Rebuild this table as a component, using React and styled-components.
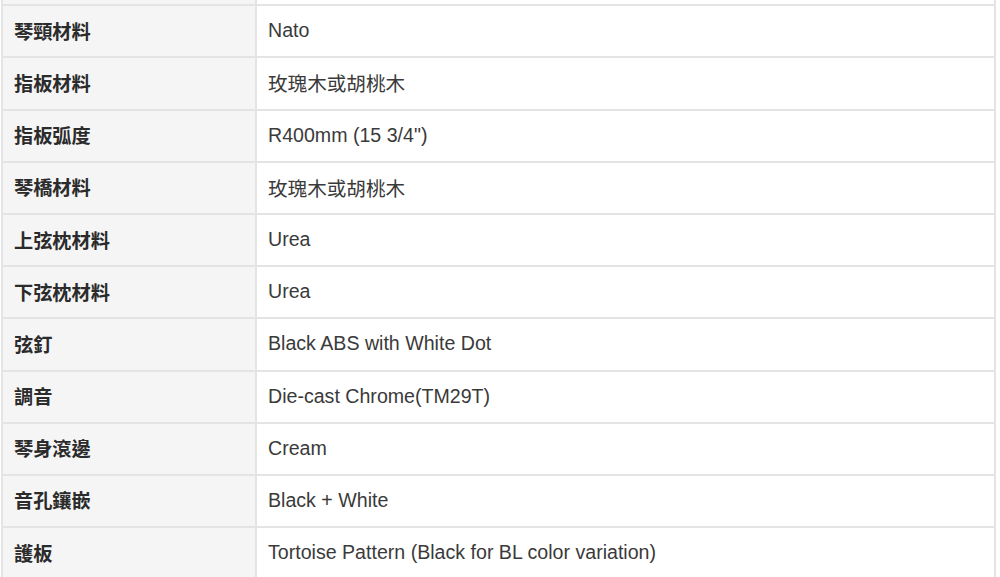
import React from 'react';
import styled, { createGlobalStyle } from 'styled-components';

const GlobalStyle = createGlobalStyle`
  html, body {
    margin: 0;
    padding: 0;
    background: #ffffff;
    overflow: hidden;
  }
`;

const SpecTable = styled.div`
  display: grid;
  grid-template-columns: 254px 1fr;
  width: 991px;
  margin: -48px 0 0 1px;
  border-left: 2px solid #e4e4e4;
  border-right: 2px solid #e4e4e4;
  font-family: "Liberation Sans", "Noto Sans CJK TC", sans-serif;
  font-size: 19.6px;
  color: #333333;
`;

const Cell = styled.div`
  display: flex;
  align-items: center;
  box-sizing: border-box;
  height: 52.2px;
  padding: 0 11px 1px;
  border-top: 2px solid #e4e4e4;
  white-space: nowrap;
`;

const Label = styled(Cell)`
  background: #f5f5f5;
  border-right: 2px solid #e4e4e4;
  font-family: "Noto Sans CJK TC", "Liberation Sans", sans-serif;
  font-weight: 700;
  font-size: 19.2px;
  color: #2b2b2b;
`;

const Value = styled(Cell)`
  background: #ffffff;
  color: #3a3a3a;
`;

// first entry is the row scrolled mostly out of view above
const specs = [
  ['', ''],
  ['琴頸材料', 'Nato'],
  ['指板材料', '玫瑰木或胡桃木'],
  ['指板弧度', 'R400mm (15 3/4")'],
  ['琴橋材料', '玫瑰木或胡桃木'],
  ['上弦枕材料', 'Urea'],
  ['下弦枕材料', 'Urea'],
  ['弦釘', 'Black ABS with White Dot'],
  ['調音', 'Die-cast Chrome(TM29T)'],
  ['琴身滾邊', 'Cream'],
  ['音孔鑲嵌', 'Black + White'],
  ['護板', 'Tortoise Pattern (Black for BL color variation)'],
];

export default function App() {
  return (
    <>
      <GlobalStyle />
      <SpecTable>
        {specs.map(([label, value], i) => (
          <React.Fragment key={i}>
            <Label>{label}</Label>
            <Value>{value}</Value>
          </React.Fragment>
        ))}
      </SpecTable>
    </>
  );
}
